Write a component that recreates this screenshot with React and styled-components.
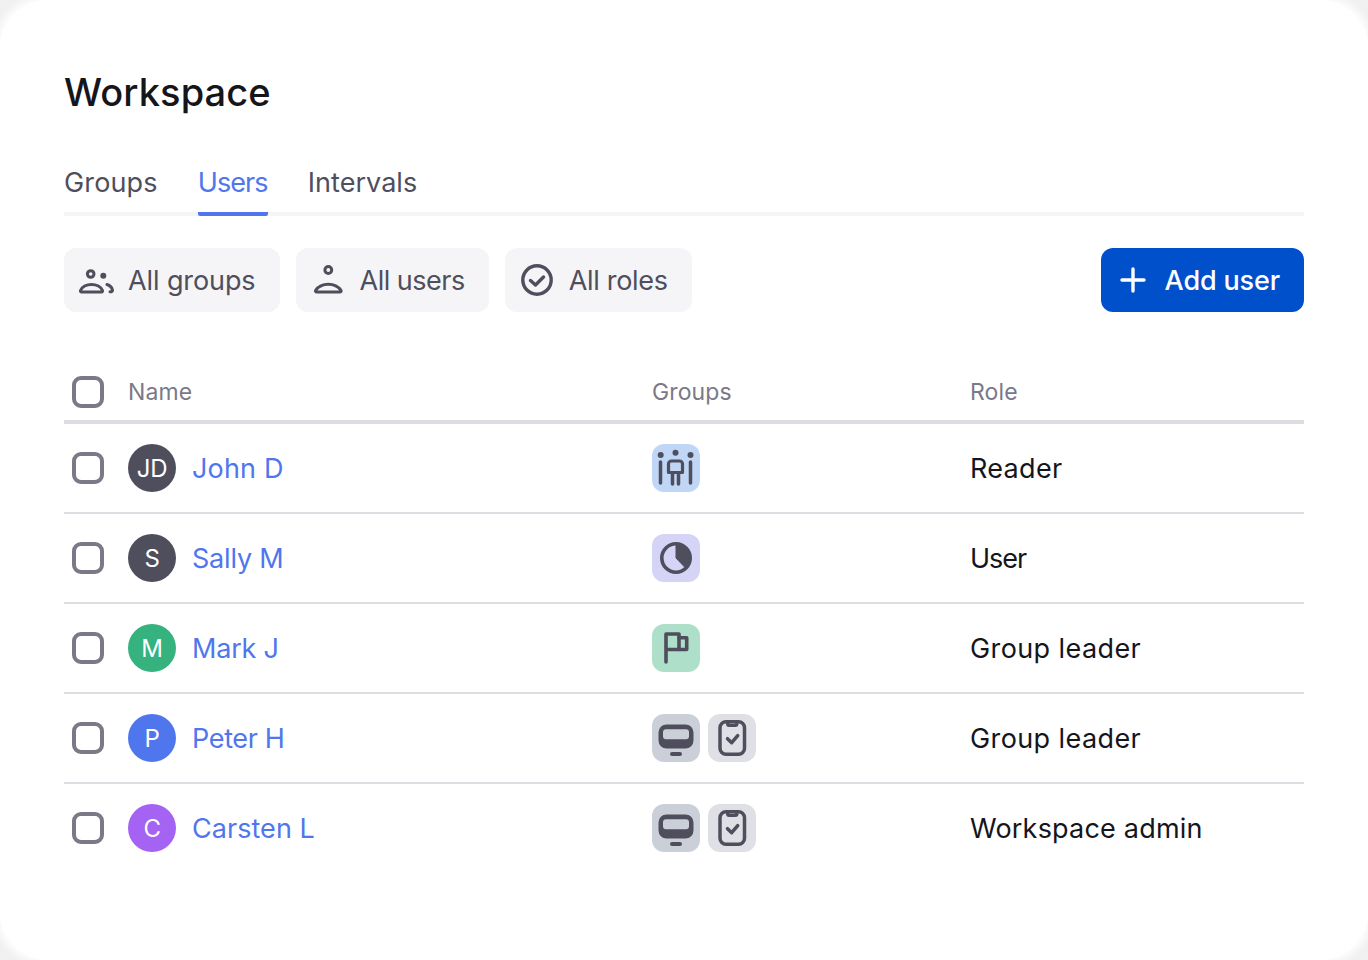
import React from "react";
import styled, { createGlobalStyle } from "styled-components";

const GlobalStyle = createGlobalStyle`
  html, body {
    margin: 0;
    padding: 0;
    background: #f0f0f1;
  }
  body {
    font-family: "Inter", "Liberation Sans", sans-serif;
  }
`;

const Root = styled.div`
  width: 1368px;
  height: 960px;
  box-sizing: border-box;
  padding: 64px 64px 0;
  background: #fff;
  border-radius: 48px;
  overflow: hidden;
  box-shadow: 0 0 10px 4px #fff;
`;

const Title = styled.h1`
  margin: 0;
  height: 56px;
  font-size: 38px;
  line-height: 56px;
  font-weight: 500;
  letter-spacing: 0.1px;
  color: #15151c;
`;

const Tabs = styled.div`
  display: flex;
  gap: 40px;
  margin-top: 36px;
  height: 60px;
  box-sizing: border-box;
  border-bottom: 4px solid #f5f5f7;
`;

const Tab = styled.div`
  height: 60px;
  box-sizing: border-box;
  padding-top: 11px;
  font-size: 27px;
  line-height: 32px;
  letter-spacing: ${(p) => p.$track}px;
  color: ${(p) => (p.$active ? "#5076ee" : "#4f4e5d")};
  border-bottom: 4px solid ${(p) => (p.$active ? "#5076ee" : "transparent")};
  border-radius: 0 0 2px 2px;
`;

const Toolbar = styled.div`
  display: flex;
  gap: 16px;
  margin-top: 32px;
`;

const FilterButton = styled.div`
  display: flex;
  align-items: center;
  gap: 16px;
  height: 64px;
  box-sizing: border-box;
  padding: 0 24px 0 16px;
  background: #f5f5f7;
  border-radius: 12px;
  font-size: 27px;
  letter-spacing: ${(p) => p.$track}px;
  color: #4f4e5d;
`;

const AddButton = styled.div`
  display: flex;
  align-items: center;
  gap: 16px;
  height: 64px;
  box-sizing: border-box;
  margin-left: auto;
  padding: 0 24px 0 16px;
  background: #0050cc;
  border-radius: 12px;
  font-size: 27px;
  font-weight: 500;
  letter-spacing: -0.15px;
  color: #fff;
`;

const TableHead = styled.div`
  display: grid;
  grid-template-columns: 588px 318px 1fr;
  align-items: center;
  margin-top: 52px;
  height: 60px;
  box-sizing: border-box;
  border-bottom: 4px solid #dcdce2;
  font-size: 23px;
  letter-spacing: 0.1px;
  color: #7a7987;
`;

const Row = styled.div`
  display: grid;
  grid-template-columns: 588px 318px 1fr;
  align-items: center;
  height: 90px;
  box-sizing: border-box;
  border-bottom: 2px solid #dcdce2;
  &:last-child {
    border-bottom-color: transparent;
  }
`;

const NameCell = styled.div`
  display: flex;
  align-items: center;
  padding-left: 8px;
`;

const Check = styled.div`
  width: 32px;
  height: 32px;
  box-sizing: border-box;
  border: 4px solid #7a7987;
  border-radius: 9px;
  margin-right: 24px;
  flex: none;
`;

const Avatar = styled.div`
  width: 48px;
  height: 48px;
  border-radius: 50%;
  background: ${(p) => p.$color};
  color: #fff;
  display: flex;
  align-items: center;
  justify-content: center;
  font-size: 24px;
  letter-spacing: -0.3px;
  margin-right: 16px;
  flex: none;
`;

const UserName = styled.a`
  font-size: 27px;
  letter-spacing: ${(p) => p.$track}px;
  color: #5076ee;
`;

const GroupCell = styled.div`
  display: flex;
  gap: 8px;
`;

const GroupBadge = styled.div`
  width: 48px;
  height: 48px;
  border-radius: 12px;
  background: ${(p) => p.$bg};
`;

const Role = styled.div`
  font-size: 27px;
  letter-spacing: ${(p) => p.$track}px;
  color: #15151c;
`;

const PlusIcon = styled.svg`
  display: block;
  flex: none;
`;

const ink = "#4f4e5d";

const Svg = ({ size = 32, box = 32, children }) => (
  <svg
    width={size}
    height={size}
    viewBox={`0 0 ${box} ${box}`}
    fill="none"
    stroke={ink}
    strokeWidth="3"
    strokeLinecap="round"
    strokeLinejoin="round"
    style={{ display: "block", flex: "none" }}
  >
    {children}
  </svg>
);

const GroupsIcon = () => (
  <span style={{ margin: "0 -2px", display: "block" }}>
    <Svg size={36} box={36}>
      <circle cx="12.700" cy="12" r="3.300" />
      <circle cx="25.300" cy="13.700" r="3" fill={ink} stroke="none" />
      <path d="M13.500 22.500c-5 0-9.500 2.500-11 6-.3.9.3 1.500 1 1.500h20c.7 0 1.300-.6 1-1.500-1.500-3.500-6-6-11-6z" />
      <path d="M29 22.500c3 1 5 3.500 5.500 5.500.2 1-.5 1.800-2.500 1.800" />
    </Svg>
  </span>
);

const UserIcon = () => (
  <Svg>
    <circle cx="16.300" cy="6" r="3.400" />
    <path d="M16.300 20.200c-5.500 0-10.500 3-12.700 6.200-.6 1 .1 1.600 1.200 1.600h23c1.100 0 1.800-.6 1.200-1.600-2.200-3.200-7.200-6.200-12.700-6.200z" />
  </Svg>
);

const RoleIcon = () => (
  <Svg>
    <circle cx="16" cy="16" r="14.200" strokeWidth="3.400" />
    <path d="M9.500 16.500l5 4.500 8-8" strokeWidth="3.400" />
  </Svg>
);

const PeopleIcon = () => (
  <Svg size={48} box={48}>
    <circle cx="23.500" cy="8.700" r="3" fill={ink} stroke="none" />
    <circle cx="8.700" cy="11" r="3" fill={ink} stroke="none" />
    <circle cx="38.500" cy="11" r="3" fill={ink} stroke="none" />
    <path d="M8.500 18v21M38.500 18v21" strokeWidth="3.500" />
    <path d="M16.500 28.500V20a3 3 0 0 1 3-3h8a3 3 0 0 1 3 3v8.500z" strokeWidth="3.200" />
    <path d="M20.500 29v11M26.500 29v11" strokeWidth="3.500" />
  </Svg>
);

const PieIcon = () => (
  <Svg size={48} box={48}>
    <circle cx="24" cy="24" r="14.200" strokeWidth="3.600" />
    <path d="M24 10v14l10 10.500A14.300 14.300 0 0 0 24 10z" fill={ink} strokeWidth="1" />
  </Svg>
);

const FlagIcon = () => (
  <Svg size={48} box={48}>
    <path d="M14 38V10h13v15.500H14" strokeWidth="3.600" />
    <path d="M27 13.700h7.700v11.800H27" strokeWidth="3.600" />
  </Svg>
);

const MonitorIcon = () => (
  <Svg size={48} box={48}>
    <path
      fillRule="evenodd"
      fill={ink}
      stroke="none"
      d="M14.500 10.500h19a8 8 0 0 1 8 8v8a8 8 0 0 1-8 8h-19a8 8 0 0 1-8-8v-8a8 8 0 0 1 8-8zM14 15.300a3 3 0 0 0-3 3v4a3 3 0 0 0 3 3h20a3 3 0 0 0 3-3v-4a3 3 0 0 0-3-3z"
    />
    <rect x="18" y="38" width="12" height="4" rx="2" fill={ink} stroke="none" />
  </Svg>
);

const ClipboardIcon = () => (
  <Svg size={48} box={48}>
    <rect x="12" y="7.800" width="24.500" height="32.500" rx="6" strokeWidth="3.500" />
    <path
      fillRule="evenodd"
      fill={ink}
      stroke="none"
      d="M18 6h12.500v4a3 3 0 0 1-3 3h-6.500a3 3 0 0 1-3-3zM21.500 9.200v.8h5.500v-.8z"
    />
    <path d="M19.500 24.700l4.200 4 6-7" strokeWidth="3.500" />
  </Svg>
);

const device = [
  { bg: "#cbd0d8", Icon: MonitorIcon },
  { bg: "#dfe0e6", Icon: ClipboardIcon },
];

const users = [
  { initials: "JD", name: "John D", track: 0.17, color: "#4f4e5d", role: "Reader", roleTrack: 0.3, groups: [{ bg: "#bfd6f6", Icon: PeopleIcon }] },
  { initials: "S", name: "Sally M", track: -0.2, color: "#4f4e5d", role: "User", roleTrack: -1, groups: [{ bg: "#d5d3f6", Icon: PieIcon }] },
  { initials: "M", name: "Mark J", track: -0.2, color: "#35b27d", role: "Group leader", roleTrack: 0.4, groups: [{ bg: "#aee0c9", Icon: FlagIcon }] },
  { initials: "P", name: "Peter H", track: -0.35, color: "#5076ee", role: "Group leader", roleTrack: 0.4, groups: device },
  { initials: "C", name: "Carsten L", track: 0.05, color: "#a463f2", role: "Workspace admin", roleTrack: 0.2, groups: device },
];

export default function App() {
  return (
    <Root>
      <GlobalStyle />
      <Title>Workspace</Title>
      <Tabs>
        <Tab $track={0.15}>Groups</Tab>
        <Tab $active $track={-0.9}>Users</Tab>
        <Tab $track={0.05}>Intervals</Tab>
      </Tabs>
      <Toolbar>
        <FilterButton $track={-0.1}>
          <GroupsIcon />
          All groups
        </FilterButton>
        <FilterButton $track={-0.5}>
          <UserIcon />
          All users
        </FilterButton>
        <FilterButton $track={-0.3}>
          <RoleIcon />
          All roles
        </FilterButton>
        <AddButton>
          <PlusIcon width="32" height="32" viewBox="0 0 32 32" stroke="#fff" strokeWidth="3.400" strokeLinecap="round">
            <path d="M16 5v22M5 16h22" />
          </PlusIcon>
          Add user
        </AddButton>
      </Toolbar>
      <TableHead>
        <NameCell>
          <Check />
          Name
        </NameCell>
        <div>Groups</div>
        <div>Role</div>
      </TableHead>
      {users.map((u) => (
        <Row key={u.name}>
          <NameCell>
            <Check />
            <Avatar $color={u.color}>{u.initials}</Avatar>
            <UserName $track={u.track}>{u.name}</UserName>
          </NameCell>
          <GroupCell>
            {u.groups.map(({ bg, Icon }) => (
              <GroupBadge key={bg} $bg={bg}>
                <Icon />
              </GroupBadge>
            ))}
          </GroupCell>
          <Role $track={u.roleTrack}>{u.role}</Role>
        </Row>
      ))}
    </Root>
  );
}
